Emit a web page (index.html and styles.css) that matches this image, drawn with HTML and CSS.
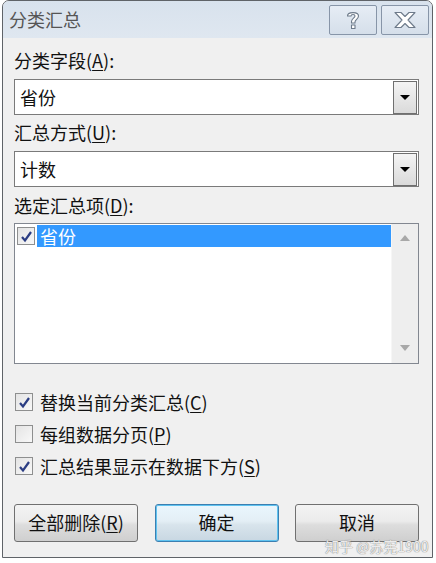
FILE: index.html
```html
<!DOCTYPE html>
<html lang="zh">
<head>
<meta charset="utf-8">
<link rel="stylesheet" href="styles.css">
</head>
<body>
<div class="window">
  <div class="titlebar">
    <span class="title">分类汇总</span>
    <div class="tbtns">
      <div class="tbtn">
        <svg width="16" height="20" viewBox="0 0 16 20"><path d="M2.5 6 C2.5 1.5 13.5 1.5 13.5 6 C13.5 9 10 9.5 10 12 L10 13 L6.5 13 L6.5 11.5 C6.5 8.5 10 8 10 6 C10 4 6 4 6 6 Z M6.5 15 L10 15 L10 18.5 L6.5 18.5 Z" fill="#fff" stroke="#6d7a8a" stroke-width="1.1" stroke-linejoin="round"/></svg>
      </div>
      <div class="tbtn">
        <svg width="24" height="18" viewBox="0 0 24 18"><path d="M2 1.5 L8 1.5 L12 5.5 L16 1.5 L22 1.5 L15 9 L22 16.5 L16 16.5 L12 12.5 L8 16.5 L2 16.5 L9 9 Z" fill="#fff" stroke="#6d7a8a" stroke-width="1.1" stroke-linejoin="round"/></svg>
      </div>
    </div>
  </div>
  <div class="body">
    <div class="label">分类字段(<u>A</u>):</div>
    <div class="combo"><span>省份</span><div class="drop"><i></i></div></div>
    <div class="label l2">汇总方式(<u>U</u>):</div>
    <div class="combo"><span>计数</span><div class="drop"><i></i></div></div>
    <div class="label l3">选定汇总项(<u>D</u>):</div>
    <div class="listbox">
      <div class="items">
        <div class="item">
          <span class="cb small checked"><svg width="13" height="13" viewBox="0 0 13 13"><path d="M2 7 L5 10.5 L11 2" fill="none" stroke="#2b3d83" stroke-width="2.2"/></svg></span>
          <span class="sel">省份</span>
        </div>
      </div>
      <div class="scroll">
        <svg width="10" height="6" viewBox="0 0 10 6"><path d="M0 6 L5 0 L10 6 Z" fill="#a8a8a8"/></svg>
        <svg width="10" height="6" viewBox="0 0 10 6"><path d="M0 0 L5 6 L10 0 Z" fill="#a8a8a8"/></svg>
      </div>
    </div>
    <div class="checks">
      <div class="check"><span class="cb checked"><svg width="13" height="13" viewBox="0 0 13 13"><path d="M2 7 L5 10.5 L11 2" fill="none" stroke="#2b3d83" stroke-width="2.2"/></svg></span><span class="ctext">替换当前分类汇总(<u>C</u>)</span></div>
      <div class="check"><span class="cb"></span><span class="ctext">每组数据分页(<u>P</u>)</span></div>
      <div class="check"><span class="cb checked"><svg width="13" height="13" viewBox="0 0 13 13"><path d="M2 7 L5 10.5 L11 2" fill="none" stroke="#2b3d83" stroke-width="2.2"/></svg></span><span class="ctext">汇总结果显示在数据下方(<u>S</u>)</span></div>
    </div>
    <div class="buttons">
      <div class="btn">全部删除(<u>R</u>)</div>
      <div class="btn default">确定</div>
      <div class="btn">取消</div>
    </div>
  </div>
  <div class="watermark">知乎 @苏宪1900</div>
</div>
</body>
</html>
```
FILE: styles.css
```css
html, body {
  margin: 0;
  padding: 0;
  background: #ffffff;
}
body {
  font-family: "Noto Sans CJK SC", "Liberation Sans", sans-serif;
  font-size: 18px;
  color: #111;
}
u {
  text-decoration: underline;
  text-underline-offset: 2px;
}
.window {
  position: relative;
  margin-left: 2px;
  width: 429px;
  height: 556px;
  border: 1px solid #5f6368;
  border-radius: 7px 7px 0 0;
  background: #f0f0f0;
  overflow: hidden;
}
.titlebar {
  height: 37px;
  background: linear-gradient(#d8e2ed, #dfe7f0);
  display: flex;
  align-items: flex-start;
  justify-content: space-between;
}
.title {
  margin: 6px 0 0 6px;
  font-size: 18px;
  line-height: 24px;
  color: #555;
}
.tbtns {
  display: flex;
  gap: 4px;
  margin: 4px 3px 0 0;
}
.tbtn {
  width: 46px;
  height: 28px;
  border: 1px solid #8795a8;
  border-radius: 2px;
  background: linear-gradient(#e6edf5, #d5dfea);
  display: flex;
  align-items: center;
  justify-content: center;
}
.body {
  padding: 0 13px 0 11px;
}
.label {
  margin-top: 11px;
  height: 22px;
  line-height: 22px;
}
.label.l2 {
  margin-top: 6px;
}
.label.l3 {
  margin-top: 7px;
}
.combo {
  margin-top: 8px;
  height: 34px;
  border: 1px solid #7a7a7a;
  background: #fff;
  display: flex;
  align-items: center;
  justify-content: space-between;
}
.combo span {
  margin-left: 5px;
  line-height: 22px;
}
.drop {
  width: 22px;
  height: 31px;
  margin-right: 1px;
  border: 1px solid #6f6f6f;
  background: linear-gradient(#f4f4f4, #dadada);
  display: flex;
  align-items: center;
  justify-content: center;
}
.drop i {
  width: 0;
  height: 0;
  border-left: 5px solid transparent;
  border-right: 5px solid transparent;
  border-top: 5px solid #000;
}
.listbox {
  margin-top: 7px;
  height: 139px;
  border: 1px solid #828790;
  background: #fff;
  display: flex;
}
.items {
  flex: 1;
  padding-top: 1px;
}
.item {
  display: flex;
  align-items: center;
  height: 22px;
}
.cb {
  box-sizing: border-box;
  width: 18px;
  height: 18px;
  border: 1px solid #8e8f8f;
  background: linear-gradient(135deg, #e4e4e4, #f8f8f8);
  display: inline-flex;
  align-items: center;
  justify-content: center;
  flex: none;
}
.cb.small {
  margin: 0 2px 0 2px;
}
.sel {
  flex: 1;
  height: 22px;
  line-height: 22px;
  background: #3399ff;
  color: #fff;
  padding-left: 3px;
  font-size: 18px;
}
.scroll {
  width: 26px;
  background: #eeeeee;
  border-left: 1px solid #f6f6f6;
  display: flex;
  flex-direction: column;
  align-items: center;
  justify-content: space-between;
  padding: 11px 0 12px;
}
.checks {
  margin-top: 27px;
  display: flex;
  flex-direction: column;
  gap: 10px;
}
.check {
  display: flex;
  align-items: center;
  gap: 7px;
  height: 22px;
  margin-left: 1px;
}
.ctext {
  line-height: 22px;
}
.buttons {
  margin-top: 27px;
  display: flex;
  justify-content: space-between;
}
.btn {
  box-sizing: border-box;
  width: 124px;
  height: 38px;
  line-height: 20px;
  padding-bottom: 3px;
  border: 1px solid #707070;
  border-radius: 3px;
  background: linear-gradient(#f3f3f3 0%, #ebebeb 45%, #dddddd 55%, #cfcfcf 100%);
  display: flex;
  align-items: center;
  justify-content: center;
}
.btn.default {
  border: 1px solid #3c7fb1;
  box-shadow: inset 0 0 0 1px #5fc3f0;
  background: linear-gradient(#eaf6fd 0%, #e3eef5 45%, #d8e4ec 55%, #c8d7e2 100%);
}
.watermark {
  position: absolute;
  left: 322px;
  top: 538px;
  font-size: 14px;
  line-height: 15px;
  color: rgba(255, 255, 255, 0.85);
  text-shadow: 0 0 1px #888, 0 0 1px #888;
  white-space: nowrap;
}
```
